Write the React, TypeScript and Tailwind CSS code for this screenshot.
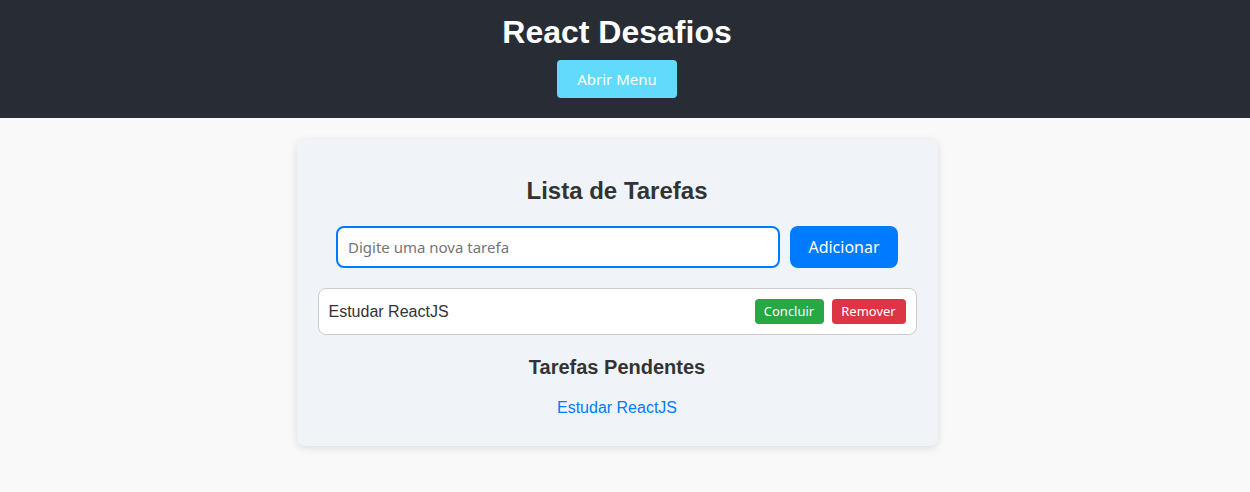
export default function App() {
  const btnFont = { fontFamily: '"Noto Sans", "Open Sans", sans-serif' };
  return (
    <div className="min-h-screen bg-[#f9f9f9]" style={{ fontFamily: '"Liberation Sans", Arial, sans-serif' }}>
      {/* Header */}
      <header className="h-[118px] bg-[#282c34] flex flex-col items-center pt-[13px] pr-[16px]">
        <h1 className="text-[32px] leading-[38px] font-bold text-white">React Desafios</h1>
        <button
          className="mt-[9px] w-[120px] h-[38px] rounded bg-[#61dafb] text-white text-[15px]"
          style={btnFont}
        >
          Abrir Menu
        </button>
      </header>

      <main className="pr-[16px]">
        {/* Card */}
        <div className="w-[641px] mx-auto mt-[21px] bg-[#f0f4f8] rounded-lg shadow-[0_2px_8px_rgba(0,0,0,0.12)] px-[21px] pt-[36px] pb-[26px]">
          <h2 className="text-center text-[24px] leading-[32px] font-bold text-[#333]">Lista de Tarefas</h2>

          <div className="flex justify-center gap-[10px] mt-[19px]">
            <input
              placeholder="Digite uma nova tarefa"
              className="w-[444px] h-[42px] rounded-lg border-2 border-[#007bff] bg-white px-[10px] text-[15px] placeholder:text-[#757575] outline-none"
              style={btnFont}
            />
            <button
              className="w-[108px] h-[42px] rounded-lg bg-[#007bff] text-white text-[16px]"
              style={btnFont}
            >
              Adicionar
            </button>
          </div>

          <ul className="mt-[20px]">
            <li className="flex items-center justify-between h-[47px] bg-white border border-[#ccc] rounded-lg pl-[10px] pr-[10px]">
              <span className="text-[16px] text-[#333]">Estudar ReactJS</span>
              <div className="flex gap-[8px]">
                <button
                  className="w-[69px] h-[25px] rounded bg-[#28a745] text-white text-[13px]"
                  style={btnFont}
                >
                  Concluir
                </button>
                <button
                  className="w-[74px] h-[25px] rounded bg-[#dc3545] text-white text-[13px]"
                  style={btnFont}
                >
                  Remover
                </button>
              </div>
            </li>
          </ul>

          <h3 className="text-center text-[20px] leading-[24px] font-bold text-[#333] mt-[20px]">Tarefas Pendentes</h3>
          <p className="text-center text-[16px] leading-[24px] text-[#007bff] mt-[17px]">Estudar ReactJS</p>
        </div>
      </main>
    </div>
  );
}
